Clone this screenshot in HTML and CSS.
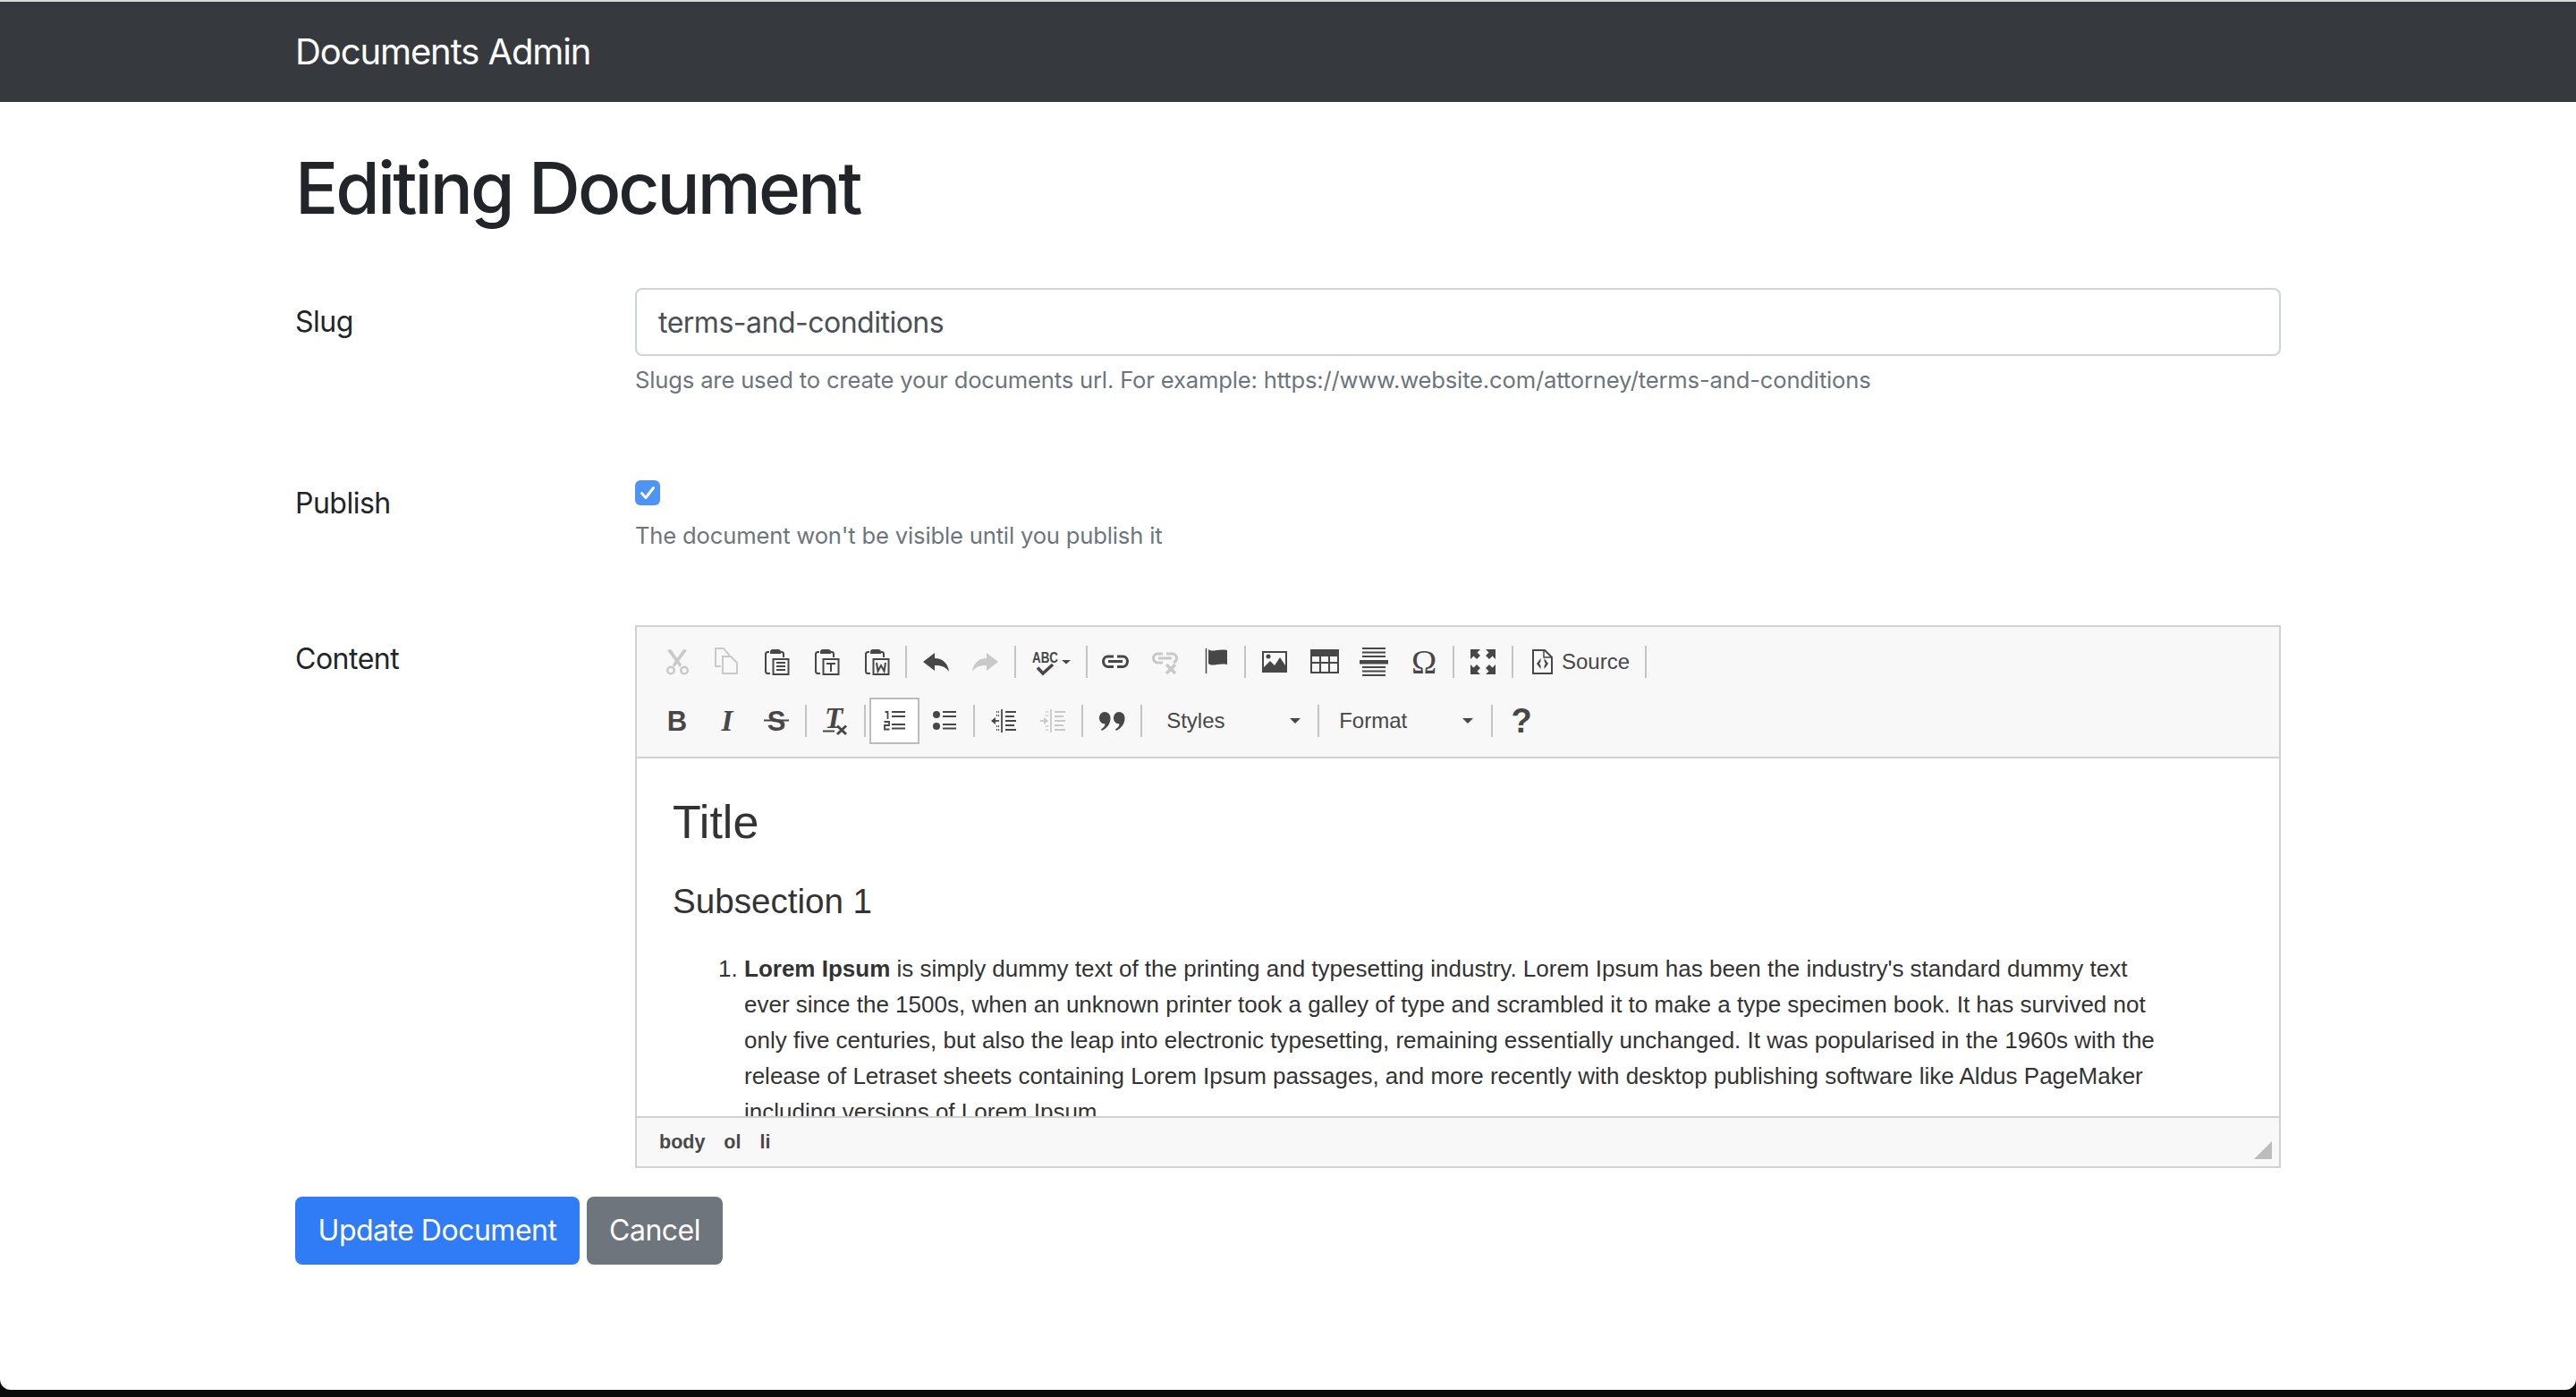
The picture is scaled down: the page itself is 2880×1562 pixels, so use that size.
FILE: index.html
```html
<!DOCTYPE html>
<html lang="en">
<head>
<meta charset="utf-8">
<title>Editing Document</title>
<link rel="stylesheet" href="styles.css">
</head>
<body>
<div class="page">
  <nav class="navbar"><a class="brand">Documents Admin</a></nav>
  <main class="container">
    <h1 class="title">Editing Document</h1>
    <form>
      <div class="row">
        <label class="label">Slug</label>
        <div>
          <input class="input" type="text" value="terms-and-conditions">
          <p class="help help-slug">Slugs are used to create your documents url. For example: https://www.website.com/attorney/terms-and-conditions</p>
        </div>
      </div>
      <div class="row">
        <label class="label">Publish</label>
        <div>
          <span class="check"><svg viewBox="0 0 28 28" width="28" height="28"><path d="M7.5 14.5L12 19.5L20.5 8.5" fill="none" stroke="#fff" stroke-width="3" stroke-linecap="round" stroke-linejoin="round"/></svg></span>
          <p class="help help-pub">The document won't be visible until you publish it</p>
        </div>
      </div>
      <div class="row row-last">
        <label class="label">Content</label>
        <div class="editor">
          <div class="toolbar">
            <div class="tb-row">
              <span class="btn off"><svg class="ic" viewBox="0 0 32 32"><path d="M5 3L9 2L21 19L19 22Z"/><path d="M27 3L23 2L11 19L13 22Z"/><circle cx="9" cy="25.500" r="3.800" fill="none" stroke="currentColor" stroke-width="2.500"/><circle cx="24" cy="25.500" r="3.800" fill="none" stroke="currentColor" stroke-width="2.500"/></svg></span>
              <span class="btn off"><svg class="ic" viewBox="0 0 32 32"><path d="M9 21H3V1H12L18 8V10M11 10H20L27 17V29H11Z" fill="none" stroke="currentColor" stroke-width="2"/></svg></span>
              <span class="btn"><svg class="ic" viewBox="0 0 32 32"><path d="M8 5H6.500Q4 5 4 7.500V26.500Q4 29 6.500 29H9M21 5H22Q24 5 24 7.500V11" fill="none" stroke="currentColor" stroke-width="2"/><path d="M9 7V5Q9 2 12 2H18Q21 2 21 5V7Z"/><rect x="12.500" y="13" width="17" height="17" fill="none" stroke="currentColor" stroke-width="2"/><path d="M16 17H26M16 21H26M16 25H26" stroke="currentColor" stroke-width="2"/></svg></span>
              <span class="btn"><svg class="ic" viewBox="0 0 32 32"><path d="M8 5H6.500Q4 5 4 7.500V26.500Q4 29 6.500 29H9M21 5H22Q24 5 24 7.500V11" fill="none" stroke="currentColor" stroke-width="2"/><path d="M9 7V5Q9 2 12 2H18Q21 2 21 5V7Z"/><rect x="12.500" y="13" width="17" height="17" fill="none" stroke="currentColor" stroke-width="2"/><path d="M16 18H26M21 18V27" stroke="currentColor" stroke-width="2"/></svg></span>
              <span class="btn"><svg class="ic" viewBox="0 0 32 32"><path d="M8 5H6.500Q4 5 4 7.500V26.500Q4 29 6.500 29H9M21 5H22Q24 5 24 7.500V11" fill="none" stroke="currentColor" stroke-width="2"/><path d="M9 7V5Q9 2 12 2H18Q21 2 21 5V7Z"/><rect x="12.500" y="13" width="17" height="17" fill="none" stroke="currentColor" stroke-width="2"/><path d="M16 17L17.500 26.500L21 20L24.500 26.500L26 17" fill="none" stroke="currentColor" stroke-width="2"/></svg></span>
              <i class="sep"></i>
              <span class="btn"><svg class="ic" viewBox="0 0 32 32"><path d="M2 16L15 6V12C24 12 30 18 31 27C27 21 22 20 15 20V26Z"/></svg></span>
              <span class="btn off"><svg class="ic" viewBox="0 0 32 32"><path d="M30 16L17 6V12C8 12 2 18 1 27C5 21 10 20 17 20V26Z"/></svg></span>
              <i class="sep"></i>
              <span class="btn btn-spell"><svg class="spell" viewBox="0 0 46 32" width="46" height="32"><text class="spell-abc" x="1" y="17" textLength="29" lengthAdjust="spacingAndGlyphs">ABC</text><path d="M7 22.500L13 29L24 19" fill="none" stroke="currentColor" stroke-width="3.500"/><path d="M34 14H44L39 18.500Z"/></svg></span>
              <i class="sep"></i>
              <span class="btn"><svg class="ic" viewBox="0 0 32 32"><path d="M14 10H7.500C4.500 10 2.500 12.500 2.500 15.500S4.500 21.500 7.500 21.500H14M18 10H24.500C27.500 10 29.500 12.500 29.500 15.500S27.500 21.500 24.500 21.500H18M8 15.500H24" fill="none" stroke="currentColor" stroke-width="3"/></svg></span>
              <span class="btn off"><svg class="ic" viewBox="0 0 32 32"><path d="M13 7H7C4.500 7 2.500 9.500 2.500 12S4.500 17 7 17H13M17 7H24C26.500 7 28.500 9.500 28.500 12S27 16 25 17M8 12H23" fill="none" stroke="currentColor" stroke-width="3"/><path d="M17 19L27 29M27 19L17 29" fill="none" stroke="currentColor" stroke-width="3.500"/></svg></span>
              <span class="btn"><svg class="ic" viewBox="0 0 32 32"><path d="M5.500 1V29" stroke="currentColor" stroke-width="1.500"/><path d="M8 2C13 6 17 1 29 3V19C18 17 13 22 8 18Z"/></svg></span>
              <i class="sep"></i>
              <span class="btn"><svg class="ic" viewBox="0 0 32 32"><path fill-rule="evenodd" d="M2 4H30V28H2ZM4 6V22L11 15L16 20L22 11L28 20V6Z"/><circle cx="9" cy="10" r="2.500"/></svg></span>
              <span class="btn"><svg class="ic" viewBox="0 0 32 32"><path fill-rule="evenodd" d="M0 2H32V29H0ZM2 10V16H10V10ZM12 10V16H20V10ZM22 10V16H30V10ZM2 18V27H10V18ZM12 18V27H20V18ZM22 18V27H30V18Z"/></svg></span>
              <span class="btn"><svg class="ic" viewBox="0 0 32 32"><path d="M3 1H29M3 5.500H29M3 10H29M3 22H29M3 26.500H29M3 31H29" stroke="currentColor" stroke-width="1.800"/><path d="M0 14H32V18.500H0Z"/></svg></span>
              <span class="btn"><svg class="ic" viewBox="0 0 32 32"><text class="omega" x="16" y="29" text-anchor="middle">Ω</text></svg></span>
              <i class="sep"></i>
              <span class="btn"><svg class="ic" viewBox="0 0 32 32"><path d="M2 2H13L9.500 5.500L13 9L9 13L5.500 9.500L2 13ZM30 2H19L22.500 5.500L19 9L23 13L26.500 9.500L30 13ZM2 30H13L9.500 26.500L13 23L9 19L5.500 22.500L2 19ZM30 30H19L22.500 26.500L19 23L23 19L26.500 22.500L30 19Z"/></svg></span>
              <i class="sep"></i>
              <span class="btn btn-source"><svg class="ic" viewBox="0 0 32 32"><path d="M6 3H19L27 11V29H6Z" fill="none" stroke="currentColor" stroke-width="2"/><path d="M18 3V11H27" fill="none" stroke="currentColor" stroke-width="1.500"/><path d="M14.500 12L10 18L14.500 24V20.500L13 18L14.500 15.500ZM18.500 12L23 18L18.500 24V20.500L20 18L18.500 15.500Z"/></svg><span class="btn-label">Source</span></span>
              <i class="sep"></i>
            </div>
            <div class="tb-row">
              <span class="btn"><svg class="ic" viewBox="0 0 32 32"><text class="g-b" x="16" y="27" text-anchor="middle">B</text></svg></span>
              <span class="btn"><svg class="ic" viewBox="0 0 32 32"><text class="g-i" x="16" y="27" text-anchor="middle">I</text></svg></span>
              <span class="btn"><svg class="ic" viewBox="0 0 32 32"><text class="g-b" x="16" y="27" text-anchor="middle">S</text><path d="M2 15.500H30" stroke="currentColor" stroke-width="2"/></svg></span>
              <i class="sep"></i>
              <span class="btn"><svg class="ic" viewBox="0 0 32 32"><text class="g-i" x="14" y="24" text-anchor="middle">T</text><path d="M2 27.500H15" stroke="currentColor" stroke-width="2"/><path d="M18 21.500L28 31M28 21.500L18 31" stroke="currentColor" stroke-width="3"/></svg></span>
              <i class="sep"></i>
              <span class="btn btn-on"><svg class="ic" viewBox="0 0 32 32"><path d="M13 6H28M13 11H28M13 20H28M13 24.500H28" stroke="currentColor" stroke-width="2"/><path d="M5.500 6H8.500V14M4.500 17H10V21H5V25.500H10.500" fill="none" stroke="currentColor" stroke-width="1.800"/></svg></span>
              <span class="btn"><svg class="ic" viewBox="0 0 32 32"><circle cx="7" cy="9" r="4"/><circle cx="7" cy="22" r="4"/><path d="M14 6H29M14 11H29M14 20H29M14 24.500H29" stroke="currentColor" stroke-width="2"/></svg></span>
              <i class="sep"></i>
              <span class="btn"><svg class="ic" viewBox="0 0 32 32"><path d="M14 3V29" stroke="currentColor" stroke-width="1.800"/><path d="M18 6H30M18 11H28M18 16H30M18 21H28M18 26H30" stroke="currentColor" stroke-width="2"/><path d="M3 16H11" stroke="currentColor" stroke-width="1.800"/><path d="M2 16L7 12V20Z"/><path d="M8 6H11M8 10H11M8 22H11M8 26H11" stroke="currentColor" stroke-width="2" stroke-dasharray="1 1"/></svg></span>
              <span class="btn off"><svg class="ic" viewBox="0 0 32 32"><path d="M14 3V29" stroke="currentColor" stroke-width="1.800"/><path d="M18 6H30M18 11H28M18 16H30M18 21H28M18 26H30" stroke="currentColor" stroke-width="2"/><path d="M2 16H9" stroke="currentColor" stroke-width="1.800"/><path d="M11 16L6 12V20Z"/><path d="M8 6H11M8 10H11M8 22H11M8 26H11" stroke="currentColor" stroke-width="2" stroke-dasharray="1 1"/></svg></span>
              <i class="sep"></i>
              <span class="btn"><svg class="ic" viewBox="0 0 32 32"><path d="M8 6C12 6 14.500 9 14.500 13C14.500 19 11 24 5 27L4 25.500C7 23.500 8.500 21.500 8.500 19.500C4.500 19.500 2 16.500 2 13C2 9 4.500 6 8 6Z"/><path d="M24 6C28 6 30.500 9 30.500 13C30.500 19 27 24 21 27L20 25.500C23 23.500 24.500 21.500 24.500 19.500C20.500 19.500 18 16.500 18 13C18 9 20.500 6 24 6Z"/></svg></span>
              <i class="sep"></i>
              <span class="combo combo-styles"><span class="btn-label">Styles</span><b class="caret"></b></span>
              <i class="sep"></i>
              <span class="combo combo-format"><span class="btn-label">Format</span><b class="caret"></b></span>
              <i class="sep"></i>
              <span class="btn"><svg class="ic" viewBox="0 0 32 32"><text class="g-q" x="16" y="29" text-anchor="middle">?</text></svg></span>
            </div>
          </div>
          <div class="editable">
            <h1>Title</h1>
            <h2>Subsection 1</h2>
            <ol>
              <li><strong>Lorem Ipsum</strong> is simply dummy text of the printing and typesetting industry. Lorem Ipsum has been the industry's standard dummy text ever since the 1500s, when an unknown printer took a galley of type and scrambled it to make a type specimen book. It has survived not only five centuries, but also the leap into electronic typesetting, remaining essentially unchanged. It was popularised in the 1960s with the release of Letraset sheets containing Lorem Ipsum passages, and more recently with desktop publishing software like Aldus PageMaker including versions of Lorem Ipsum.</li>
            </ol>
          </div>
          <div class="statusbar">
            <div class="path"><span>body</span><span>ol</span><span>li</span></div>
            <span class="resizer"></span>
          </div>
        </div>
      </div>
      <div class="actions">
        <button class="button primary" type="button">Update Document</button>
        <button class="button secondary" type="button">Cancel</button>
      </div>
    </form>
  </main>
</div>
</body>
</html>
```

FILE: styles.css
```css
* { box-sizing: border-box; }
html, body { margin: 0; height: 1562px; overflow: hidden; background: #0b0b0b; }
body { font-family: Inter, "Liberation Sans", sans-serif; font-size: 32px; line-height: 48px; letter-spacing: -0.5px; color: #212529; }
.page { height: 1554px; background: #fff; border-top: 2px solid #d9d9d9; border-radius: 0 0 12px 12px; overflow: hidden; }
.navbar { height: 112px; background: #363a3f; padding-left: 330px; display: flex; align-items: center; }
.brand { color: #fff; font-size: 40px; letter-spacing: -1.1px; }
.container { width: 2220px; margin-left: 330px; padding-top: 48px; }
.title { margin: 0 0 64px; font-size: 80px; line-height: 96px; font-weight: 500; letter-spacing: -2.9px; }
.row { display: grid; grid-template-columns: 380px 1fr; margin-bottom: 80px; }
.row-last { margin-bottom: 32px; }
.label { padding-top: 14px; line-height: 48px; }
.input { display: block; width: 100%; height: 76px; padding: 0 24px; border: 2px solid #ced4da; border-radius: 8px; font: 32px/48px Inter, "Liberation Sans", sans-serif; letter-spacing: -0.5px; color: #495057; background: #fff; }
.help { margin: 0; font-size: 25.6px; line-height: 39px; letter-spacing: -0.17px; color: #6c757d; }
.help-slug { margin: 7px 0 1px; }
.help-pub { margin: 14px 0 1px; }
.check { display: block; width: 28px; height: 28px; margin-top: 12px; border-radius: 6px; background: #4e94f6; }
.check svg { display: block; }
.editor { border: 2px solid #d1d1d1; height: 607px; display: flex; flex-direction: column; font-family: "Liberation Sans", Arial, sans-serif; letter-spacing: 0; }
.toolbar { height: 147px; flex: none; background: #f8f8f8; border-bottom: 2px solid #d1d1d1; padding: 13px 0 0 17px; display: flex; flex-direction: column; gap: 14px; }
.tb-row { display: flex; align-items: center; height: 52px; }
.btn { width: 55.8px; height: 52px; flex: none; display: flex; align-items: center; justify-content: center; color: #474747; fill: currentColor; }
.btn.off { color: #c9c9c9; }
.btn-on { background: #fff; border: 2px solid #bcbcbc; }
.btn-spell { width: 70px; justify-content: flex-start; padding-left: 13px; }
.btn-source { width: 139px; justify-content: flex-start; padding-left: 12px; gap: 6px; }
.ic { width: 32px; height: 32px; flex: none; overflow: visible; }
.spell { overflow: visible; }
.ic text, .spell text { fill: currentColor; stroke: none; }
.sep { display: block; width: 2px; height: 36px; margin: 0 4px; background: #c4c4c4; flex: none; }
.btn-label { font-size: 24px; line-height: 32px; color: #474747; }
.spell-abc { font: bold 17px "Liberation Sans", sans-serif; }
.omega { font: 38px "Liberation Serif", serif; stroke: currentColor; }
.g-b { font: bold 31px "Liberation Sans", sans-serif; }
.g-i { font: italic bold 33px "Liberation Serif", serif; }
.g-q { font: bold 38px "Liberation Sans", sans-serif; }
.combo { height: 52px; flex: none; display: flex; align-items: center; justify-content: space-between; }
.combo-styles { width: 188px; padding: 0 15px 0 23px; }
.combo-format { width: 184px; padding: 0 16px 0 18px; }
.caret { width: 0; height: 0; border: 6px solid transparent; border-top: 6px solid #474747; border-bottom: 0; }
.editable { height: 400px; flex: none; overflow: hidden; padding: 0 128px 0 40px; font-size: 26px; line-height: 40px; color: #333; background: #fff; }
.editable h1 { margin: 35px 0 0; font-size: 52px; line-height: 72px; font-weight: 400; }
.editable h2 { margin: 23px 0 0; font-size: 38.6px; line-height: 60px; font-weight: 400; }
.editable ol { margin: 25px 0 0; padding-left: 80px; }
.statusbar { height: 54px; flex: 1; background: #f8f8f8; border-top: 2px solid #d1d1d1; display: flex; align-items: center; justify-content: space-between; padding: 0 8px 0 25px; position: relative; }
.path { display: flex; gap: 21px; font-size: 21.5px; line-height: 30px; font-weight: bold; color: #484848; }
.resizer { position: absolute; right: 8px; bottom: 8px; width: 20px; height: 20px; background: #bcbcbc; clip-path: polygon(100% 0, 100% 100%, 0 100%); }
.actions { display: flex; gap: 8px; }
.button { height: 76px; padding: 0; border: 0; border-radius: 8px; color: #fff; font: 32px/48px Inter, "Liberation Sans", sans-serif; letter-spacing: -0.5px; white-space: nowrap; }
.primary { background: #2f7cf6; width: 318px; }
.secondary { background: #6e757c; width: 152px; }
```
